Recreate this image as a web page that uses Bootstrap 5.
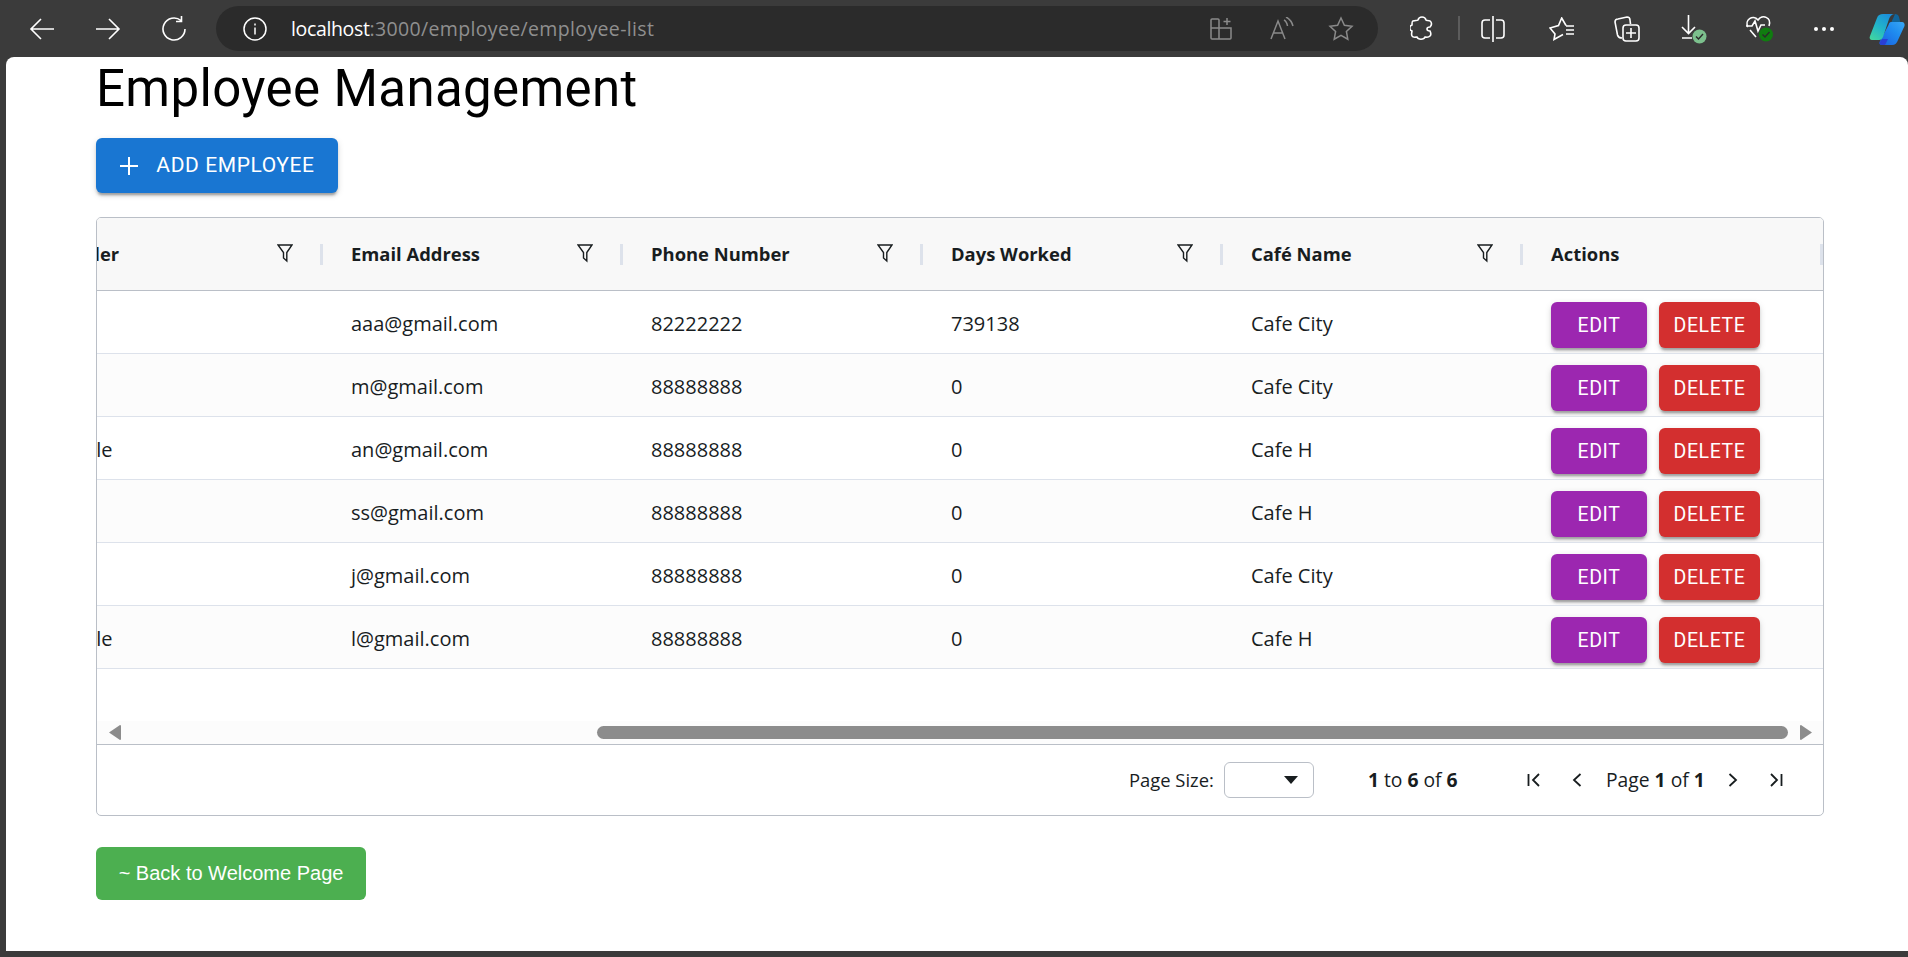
<!DOCTYPE html>
<html lang="en">
<head>
  <meta charset="UTF-8">
  <meta name="viewport" content="width=device-width, initial-scale=1.0">
  <title>Employee Management</title>
  <link href="https://cdn.jsdelivr.net/npm/bootstrap@5.3.3/dist/css/bootstrap.min.css" rel="stylesheet">
  <style>
    html, body { height: 100%; }
    body { background: #3b3b3b; overflow: hidden; font-family: "Open Sans", sans-serif; }

    /* browser toolbar */
    .bar-top { height: 57px; padding-left: 9px; }
    .bar-btn { width: 66px; height: 51px; margin-top: 3px; flex: none; }
    .bar-btn-slim { width: 65px; }
    .nudge-3 { margin-left: 3px; }
    .nudge-2 { margin-left: 2px; }
    .bar-btn svg, .pill-icon svg { display: block; }
    .url-pill { width: 1162px; height: 45px; margin: 6px 10px 0 9px; background: #2b2b2b; border-radius: 23px; padding-left: 27px; flex: none; }
    .url-text { margin-left: 24px; font-size: 19.5px; letter-spacing: .35px; color: #8f8f8f; white-space: nowrap; }
    .url-host { color: #fff; letter-spacing: -.35px; }
    .pill-icons { gap: 34px; padding-right: 24px; }
    .bar-sep { width: 2px; height: 24px; background: #5c5c5c; margin-top: 16px; margin-left: 4px; flex: none; }
    .logo-wrap { width: 36px; margin-left: 13px; margin-top: 13px; flex: none; }

    /* page */
    .page-area { height: 894px; background: #fff; margin-left: 6px; border-radius: 8px 8px 0 0; padding-left: 90px; }
    .page-title { font: 400 51px/63px Roboto, sans-serif; letter-spacing: .375px; color: #000; margin: 0 0 18px; }
    .mui-btn { display: inline-flex; align-items: center; justify-content: center; border: 0; color: #fff; font-family: Roboto, sans-serif; font-weight: 400; border-radius: 6px; text-transform: uppercase; letter-spacing: .6px; box-shadow: 0 4px 2px -2px rgba(0,0,0,.2), 0 3px 3px 0 rgba(0,0,0,.14), 0 2px 7px 0 rgba(0,0,0,.12); }
    .add-btn { width: 242px; height: 55px; background: #1976d2; font-size: 21px; padding: 0; }
    .add-btn svg { margin-right: 17px; }
    .edit-btn { width: 96px; height: 46px; background: #9c27b0; font-size: 19.5px; padding: 2px 0 0; }
    .del-btn { width: 101px; height: 46px; background: #d32f2f; font-size: 19.5px; padding: 2px 0 0; }

    /* grid */
    .grid-box { width: 1728px; height: 599px; margin-top: 24px; border: 1.5px solid #babfc7; border-radius: 5px; overflow: hidden; background: #fff; }
    .grid-body { height: 503px; overflow: hidden; }
    .emp-table { table-layout: fixed; width: 1726px; margin: 0; color: #181d1f; font-size: 20px; }
    .emp-table col.col-cut { width: 226px; }
    .emp-table col.col-full { width: 300px; }
    .emp-table th { position: relative; height: 72px; background: #f8f8f8; font-weight: 700; font-size: 18.4px; padding: 0 0 0 28px; vertical-align: middle; border-bottom: 1.5px solid #babfc7; color: #181d1f; overflow: hidden; white-space: nowrap; }
    .emp-table th::after { content: ""; position: absolute; right: 0; top: 26px; width: 3px; height: 21px; background: #dde2eb; }
    .emp-table th .head-row { padding-right: 30px; }
    .emp-table td { height: 63px; padding: 4px 0 0 28px; vertical-align: middle; border-bottom: 1.5px solid #dde2eb; background: #fff; white-space: nowrap; overflow: hidden; box-shadow: none; }
    .emp-table tr.row-alt td { background: #fcfcfc; }
    .emp-table .cell-cut { padding-left: 0; }
    .cut-head { display: inline-block; margin-left: -45px; }
    .cut-cell { display: inline-block; margin-left: -52px; }
    .action-gap { gap: 12px; margin-top: 3px; }
    .hscroll { height: 24px; background: #fcfcfc; border-bottom: 1.5px solid #babfc7; padding-left: 12px; }
    .hscroll-thumb { width: 1191px; height: 13px; background: #8c8c8c; border-radius: 7px; margin-left: 476px; margin-right: 12px; }
    .grid-foot { height: 70px; padding-left: 1032px; font-size: 19.3px; color: #181d1f; white-space: nowrap; }
    .size-label { font-size: 18.4px; }
    .size-select { width: 90px; height: 36px; border: 1.5px solid #babfc7; border-radius: 6px; margin-left: 10px; margin-right: 54px; padding-right: 15px; }
    .size-arrow { width: 0; height: 0; border-left: 7px solid transparent; border-right: 7px solid transparent; border-top: 8px solid #181d1f; }
    .count-text { width: 145px; flex: none; }
    .pager-icon { width: 43px; flex: none; }
    .pager-text { width: 113px; text-align: center; flex: none; }
    .back-btn { display: block; width: 270px; height: 53px; margin-top: 31px; background: #4caf50; color: #fff; border: 0; border-radius: 6px; font: 400 20px "Liberation Sans", sans-serif; padding: 0; }
  </style>
</head>
<body>

<!-- browser toolbar -->
<div class="bar-top d-flex">
  <div class="bar-btn d-flex align-items-center justify-content-center">
    <svg width="26" height="24" viewBox="0 0 26 24" fill="none" stroke="#fff" stroke-width="1.6"><path d="M25 12H2M12 2L2 12l10 10"/></svg>
  </div>
  <div class="bar-btn d-flex align-items-center justify-content-center">
    <svg width="26" height="24" viewBox="0 0 26 24" fill="none" stroke="#fff" stroke-width="1.6"><path d="M1 12h23M14 2l10 10-10 10"/></svg>
  </div>
  <div class="bar-btn d-flex align-items-center justify-content-center">
    <svg width="26" height="26" viewBox="0 0 26 26" fill="none" stroke="#fff" stroke-width="1.6"><path d="M20 4.500A11 11 0 1 0 24 13M20.500 0v5.500H15"/></svg>
  </div>
  <div class="url-pill d-flex align-items-center">
    <svg width="24" height="24" viewBox="0 0 24 24" fill="none" stroke="#fff" stroke-width="1.5"><circle cx="12" cy="12" r="11"/><path d="M12 10.500v7M12 6.500v2"/></svg>
    <span class="url-text"><span class="url-host">localhost</span>:3000/employee/employee-list</span>
    <div class="pill-icons d-flex align-items-center ms-auto">
      <div class="pill-icon me-1">
        <svg width="22" height="23" viewBox="0 0 22 23" fill="none" stroke="#8a8a8a" stroke-width="1.5"><path d="M1 11V3a1 1 0 0 1 1-1h6a1 1 0 0 1 1 1v19H2a1 1 0 0 1-1-1zM1 11h20v10a1 1 0 0 1-1 1H9M17 1v7M13.500 4.500h7"/></svg>
      </div>
      <div class="pill-icon">
        <svg width="24" height="23" viewBox="0 0 24 23" fill="none" stroke="#8a8a8a" stroke-width="1.5"><path d="M1 22L8 4l7 18M3.500 16h9M14 3c2 1 3 3 3.500 6M16 0c4 2 6 5 7 9"/></svg>
      </div>
      <div class="pill-icon">
        <svg width="26" height="25" viewBox="0 0 26 25" fill="none" stroke="#8a8a8a" stroke-width="1.5"><path d="M13 2l3.400 7.200 7.600 1-5.600 5.300 1.400 7.700-6.800-3.800-6.800 3.800 1.400-7.700L2 10.200l7.600-1z"/></svg>
      </div>
    </div>
  </div>
  <div class="bar-btn d-flex align-items-center justify-content-center">
    <svg width="23" height="25" viewBox="0 0 23 25" fill="none" stroke="#fff" stroke-width="1.6"><path d="M8 4c1-4 7-4 8 0 0 1 4 0 5 2 1 2 0 4-1 5-2 0-3 1-3 2s1 2 3 2c1 2 1 4 0 5-2 2-4 1-5 1-1 3-7 3-8 0-1 0-4 1-5-1s0-4 0-5c-3-1-3-5 0-6 0-2 0-4 1-4 2-1 4 0 5-1z"/></svg>
  </div>
  <div class="bar-sep"></div>
  <div class="bar-btn d-flex align-items-center justify-content-center">
    <svg width="24" height="26" viewBox="0 0 24 26" fill="none" stroke="#fff" stroke-width="1.6"><path d="M12 0v26M9 4H4a3 3 0 0 0-3 3v12a3 3 0 0 0 3 3h5M15 4h5a3 3 0 0 1 3 3v12a3 3 0 0 1-3 3h-5"/></svg>
  </div>
  <div class="bar-btn bar-btn-slim nudge-3 d-flex align-items-center justify-content-center">
    <svg width="26" height="24" viewBox="0 0 26 24" fill="none" stroke="#fff" stroke-width="1.6"><path d="M17 8.500L12.700 1 9.500 8.500 1 11l5 6-1 5.500 9-5M17 9h8M17 13h8M17 17h8"/></svg>
  </div>
  <div class="bar-btn bar-btn-slim d-flex align-items-center justify-content-center">
    <svg width="26" height="26" viewBox="0 0 26 26" fill="none" stroke="#fff" stroke-width="1.6"><path d="M8 22c-2 0-4-1-4.500-3L1 6a3 3 0 0 1 3-3l9-2a3 3 0 0 1 3 3l.5 4"/><rect x="9" y="9" width="16" height="16" rx="3"/><path d="M17 12v10M12 17h10"/></svg>
  </div>
  <div class="bar-btn bar-btn-slim nudge-2 d-flex align-items-center justify-content-center">
    <svg width="26" height="30" viewBox="0 0 26 30"><path d="M7.500 1v18M1 13l6.500 6.500L14 13M1 24h10" fill="none" stroke="#fff" stroke-width="1.6"/><circle cx="18.500" cy="22.500" r="7" fill="#7cc08d"/><path d="M15 22.500l2.500 2.500 4.500-5" fill="none" stroke="#2b2b2b" stroke-width="1.4"/></svg>
  </div>
  <div class="bar-btn bar-btn-slim d-flex align-items-center justify-content-center">
    <svg width="28" height="27" viewBox="0 0 28 27"><path d="M3 12C-1 5 8-1 13 5c4-6 14-3 11 6M5 15l6 7M1 11h6l3-5 3 10 3-6h4" fill="none" stroke="#fff" stroke-width="1.6"/><circle cx="21" cy="19.500" r="7" fill="#107c10"/><path d="M17.500 19.500l2.500 2.500 4.500-5" fill="none" stroke="#2b2b2b" stroke-width="1.4"/></svg>
  </div>
  <div class="bar-btn bar-btn-slim d-flex align-items-center justify-content-center">
    <svg width="20" height="4" viewBox="0 0 20 4" fill="#fff"><circle cx="2" cy="2" r="2"/><circle cx="10" cy="2" r="2"/><circle cx="18" cy="2" r="2"/></svg>
  </div>
  <div class="logo-wrap">
    <svg width="36" height="32" viewBox="0 0 36 32">
      <defs>
        <linearGradient id="copA" x1="0" y1="1" x2=".7" y2="0"><stop offset="0" stop-color="#46d99a"/><stop offset=".5" stop-color="#22b6c8"/><stop offset="1" stop-color="#1b8fdc"/></linearGradient>
        <linearGradient id="copB" x1="0" y1="1" x2="1" y2="0"><stop offset="0" stop-color="#1a5fe0"/><stop offset=".6" stop-color="#1f8df0"/><stop offset="1" stop-color="#3aa8f5"/></linearGradient>
      </defs>
      <path d="M26 1c2 0 3.500 1 4 3l1.500 6H22z" fill="#10649a"/>
      <path d="M22 9h11c2 0 3 2 2.500 4L29 27c-1 3-3 5-6 5H13c-2 0-3-1-2.500-3l9-17c.5-2 1.500-3 2.500-3z" fill="url(#copB)"/>
      <path d="M13 26h6l-3 6h-3c-2 0-3-2-2-3z" fill="#2a3fd6"/>
      <path d="M14 1h12c-3 0-5 2-6 5l-6 18c-1 2-2 3-4 3H3c-2 0-3-2-2-4L8 5c1-3 3-4 6-4z" fill="url(#copA)"/>
    </svg>
  </div>
</div>

<!-- page -->
<div class="page-area">
  <h1 class="page-title">Employee Management</h1>
  <button class="mui-btn add-btn" type="button">
    <svg width="20" height="20" viewBox="0 0 20 20" fill="none" stroke="#fff" stroke-width="2"><path d="M10 1v18M1 10h18"/></svg>
    Add Employee
  </button>

  <div class="grid-box">
    <div class="grid-body">
      <table class="table emp-table">
        <colgroup>
          <col class="col-cut"><col class="col-full"><col class="col-full"><col class="col-full"><col class="col-full"><col class="col-full">
        </colgroup>
        <thead>
          <tr id="head-row"></tr>
        </thead>
        <tbody id="emp-rows"></tbody>
      </table>
    </div>
    <div class="hscroll d-flex align-items-center">
      <svg width="12" height="15" viewBox="0 0 12 15" fill="#8c8c8c"><path d="M0 7.500L11 0a1 1 0 0 1 1 1v13a1 1 0 0 1-1 1z"/></svg>
      <div class="hscroll-thumb"></div>
      <svg width="12" height="15" viewBox="0 0 12 15" fill="#8c8c8c"><path d="M12 7.500L1 15a1 1 0 0 1-1-1V1a1 1 0 0 1 1-1z"/></svg>
    </div>
    <div class="grid-foot d-flex align-items-center">
      <span class="size-label">Page Size:</span>
      <div class="size-select d-flex align-items-center justify-content-end"><div class="size-arrow"></div></div>
      <span class="count-text"><b>1</b> to <b>6</b> of <b>6</b></span>
      <div class="pager-icon d-flex justify-content-center">
        <svg width="14" height="14" viewBox="0 0 14 14" fill="none" stroke="#181d1f" stroke-width="1.8"><path d="M1.500 1v12M12 1L6 7l6 6"/></svg>
      </div>
      <div class="pager-icon d-flex justify-content-center">
        <svg width="10" height="14" viewBox="0 0 10 14" fill="none" stroke="#181d1f" stroke-width="1.8"><path d="M8.500 1L2 7l6.500 6"/></svg>
      </div>
      <span class="pager-text">Page <b>1</b> of <b>1</b></span>
      <div class="pager-icon d-flex justify-content-center">
        <svg width="10" height="14" viewBox="0 0 10 14" fill="none" stroke="#181d1f" stroke-width="1.8"><path d="M1.500 1L8 7l-6.500 6"/></svg>
      </div>
      <div class="pager-icon d-flex justify-content-center">
        <svg width="14" height="14" viewBox="0 0 14 14" fill="none" stroke="#181d1f" stroke-width="1.8"><path d="M12.500 1v12M2 1l6 6-6 6"/></svg>
      </div>
    </div>
  </div>

  <button class="back-btn" type="button">~ Back to Welcome Page</button>
</div>

<script src="https://cdn.jsdelivr.net/npm/bootstrap@5.3.3/dist/js/bootstrap.bundle.min.js"></script>
<script>
  const filterIcon = '<svg width="16" height="19" viewBox="0 0 16 19" fill="none" stroke="#181d1f" stroke-width="1.4"><path d="M1 1h14L9.800 8.500V17L6.500 14V8.500z"/></svg>';
  const heads = ['Gender', 'Email Address', 'Phone Number', 'Days Worked', 'Café Name'];
  const employees = [
    ['Male', 'aaa@gmail.com', '82222222', '739138', 'Cafe City'],
    ['Male', 'm@gmail.com', '88888888', '0', 'Cafe City'],
    ['Female', 'an@gmail.com', '88888888', '0', 'Cafe H'],
    ['Male', 'ss@gmail.com', '88888888', '0', 'Cafe H'],
    ['Male', 'j@gmail.com', '88888888', '0', 'Cafe City'],
    ['Female', 'l@gmail.com', '88888888', '0', 'Cafe H']
  ];

  document.getElementById('head-row').innerHTML = heads.map((h, i) => `
    <th class="${i === 0 ? 'cell-cut' : ''}">
      <div class="head-row d-flex justify-content-between align-items-center">
        <span class="${i === 0 ? 'cut-head' : ''}">${h}</span>${filterIcon}
      </div>
    </th>`).join('') + '<th>Actions</th>';

  document.getElementById('emp-rows').innerHTML = employees.map((e, r) => `
    <tr class="${r % 2 ? 'row-alt' : ''}">
      <td class="cell-cut"><span class="cut-cell">${e[0]}</span></td>
      <td>${e[1]}</td><td>${e[2]}</td><td>${e[3]}</td><td>${e[4]}</td>
      <td><div class="action-gap d-flex">
        <button class="mui-btn edit-btn" type="button">Edit</button>
        <button class="mui-btn del-btn" type="button">Delete</button>
      </div></td>
    </tr>`).join('');
</script>
</body>
</html>
